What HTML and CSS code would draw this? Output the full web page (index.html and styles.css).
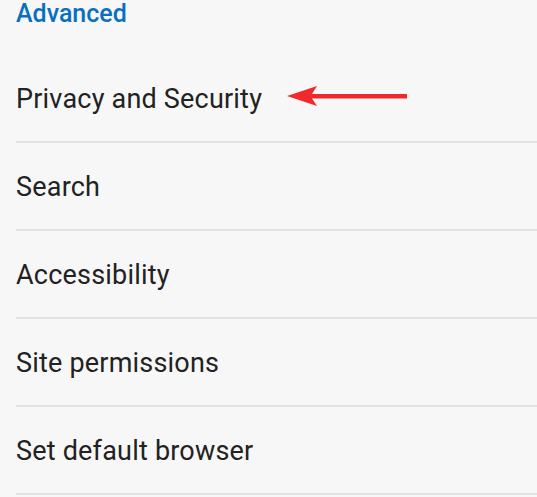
FILE: index.html
```html
<!DOCTYPE html>
<html>
<head>
<meta charset="utf-8">
<link rel="stylesheet" href="styles.css">
</head>
<body>
<div class="screen">
  <div class="section-title">Advanced</div>
  <ul class="list">
    <li class="item">
      <span class="label">Privacy and Security</span>
      <svg class="arrow" width="124" height="24" viewBox="0 0 124 24">
        <path d="M1 12 L31 2 L26 10 L121 10 L121 14.5 L26 14.5 L31 22 Z" fill="#f02a2c"/>
      </svg>
    </li>
    <li class="item"><span class="label">Search</span></li>
    <li class="item"><span class="label">Accessibility</span></li>
    <li class="item"><span class="label">Site permissions</span></li>
    <li class="item"><span class="label">Set default browser</span></li>
  </ul>
</div>
</body>
</html>
```
FILE: styles.css
```css
html, body {
  margin: 0;
  padding: 0;
  background: #f7f7f7;
}
.screen {
  font-family: Roboto, "Noto Sans", sans-serif;
  color: #222222;
  height: 497px;
  overflow: hidden;
}
.section-title {
  height: 53px;
  box-sizing: border-box;
  padding-left: 16px;
  color: #0a6fc2;
  font-weight: 500;
  font-size: 25px;
  line-height: 28px;
}
.list {
  list-style: none;
  margin: 2px 0 0 16px;
  padding: 0;
}
.item {
  position: relative;
  height: 84px;
  border-bottom: 2px solid #e2e2e2;
  display: flex;
  align-items: center;
  padding-top: 2px;
}
.label {
  font-size: 27px;
  line-height: 30px;
  letter-spacing: 0.2px;
}
.arrow {
  position: absolute;
  left: 270px;
  top: 29px;
}
```
